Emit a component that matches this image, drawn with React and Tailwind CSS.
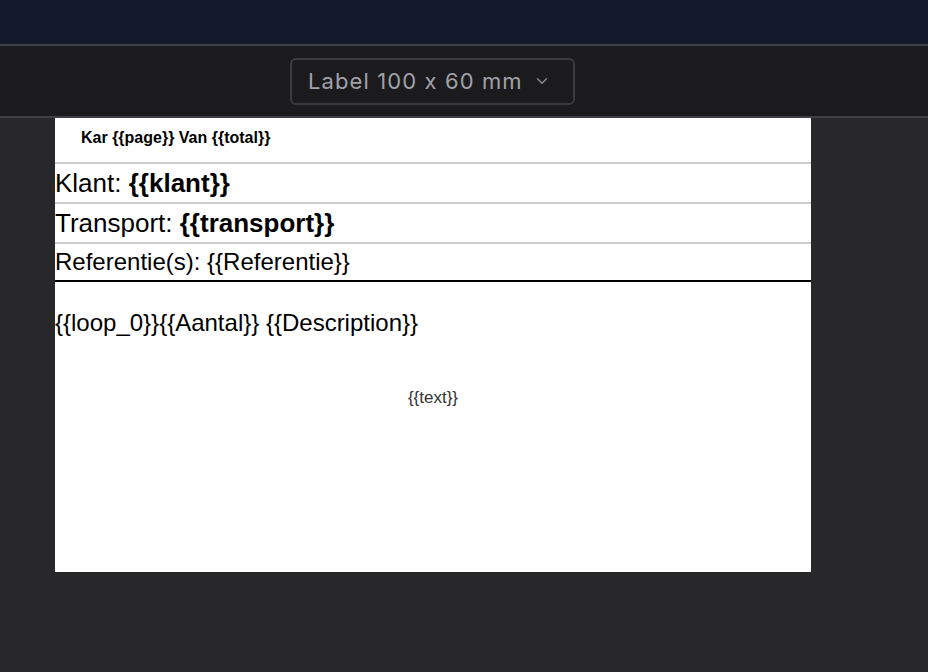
import React from "react";

function Chevron() {
  return (
    <svg width="18" height="18" viewBox="0 0 24 24" fill="none" stroke="currentColor" strokeWidth="1.8" strokeLinecap="round" strokeLinejoin="round">
      <path d="m6 9 6 6 6-6" />
    </svg>
  );
}

export default function App() {
  return (
    <div className="w-[928px] h-[672px] flex flex-col bg-[#28282a] overflow-hidden">
      {/* top bar */}
      <div className="h-[46px] bg-[#131a2b] border-b-2 border-[#3f3f46]" />

      {/* toolbar */}
      <div className="h-[72px] bg-[#1b1b1d] border-b-2 border-[#3f3f46] flex items-center">
        <button className="ml-[290px] h-[47px] w-[285px] rounded-md border-2 border-[#3a3a40] flex items-center pl-[16px] gap-[10px] text-[#a1a1aa] text-[22px] tracking-[1.1px] font-['Inter',sans-serif] [font-feature-settings:'calt'_0]">
          <span>Label 100 x 60 mm</span>
          <span className="text-[#8a8a92]">
            <Chevron />
          </span>
        </button>
      </div>

      {/* canvas */}
      <div className="flex-1 px-[55px]">
        <div className="w-[756px] h-[454px] bg-white flex flex-col font-['Liberation_Sans',Arial,sans-serif] text-black">
          <div className="h-[46px] flex items-center pl-[26px] pb-[4px] text-[16px] font-bold border-b-2 border-[#cccccc]">
            Kar {"{{page}}"} Van {"{{total}}"}
          </div>
          <div className="h-[40px] flex items-center text-[26px] border-b-2 border-[#cccccc]">
            Klant:&nbsp;<span className="font-bold">{"{{klant}}"}</span>
          </div>
          <div className="h-[40px] flex items-center text-[26px] border-b-2 border-[#cccccc]">
            Transport:&nbsp;<span className="font-bold">{"{{transport}}"}</span>
          </div>
          <div className="h-[38px] flex items-center text-[24px] border-b-2 border-black">
            Referentie(s): {"{{Referentie}}"}
          </div>
          <div className="pt-[26px] text-[24px] leading-[30px]">
            {"{{loop_0}}{{Aantal}} {{Description}}"}
          </div>
          <div className="mt-[47px] text-center text-[17px] text-[#333333]">
            {"{{text}}"}
          </div>
        </div>
      </div>
    </div>
  );
}
